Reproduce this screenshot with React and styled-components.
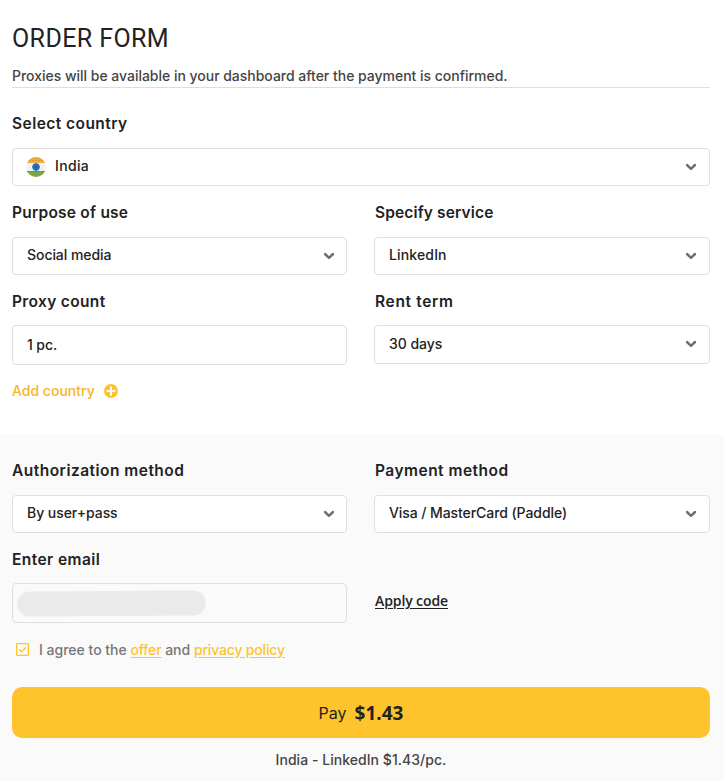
import React from "react";
import styled, { createGlobalStyle } from "styled-components";

const GlobalStyle = createGlobalStyle`
  * { box-sizing: border-box; }
  body {
    margin: 0;
    background: #fff;
    color: #222;
    font-family: Inter, "Liberation Sans", sans-serif;
    font-size: 14px;
    font-weight: 450;
  }
`;

const Page = styled.main`
  display: flex;
  flex-direction: column;
  height: 781px;
  overflow: hidden;
`;

const Section = styled.section`
  padding: 24px 14px 0 12px;
  height: 434px;
`;

const PaymentSection = styled(Section)`
  height: 347px;
  padding-top: 27px;
  background: #fafafa;
`;

const Header = styled.header`
  display: flex;
  flex-direction: column;
  gap: 12px;
  border-bottom: 1px solid #dedede;
  margin-bottom: 26px;
`;

const Title = styled.h1`
  margin: 0;
  font: 400 25px/30px Roboto, sans-serif;
  letter-spacing: 0.4px;
`;

const Subtitle = styled.p`
  margin: 0;
  height: 21px;
  line-height: 20px;
  color: #444;
  white-space: nowrap;
  letter-spacing: -0.02px;
`;

const Grid = styled.div`
  display: grid;
  grid-template-columns: ${(p) => (p.$single ? "1fr" : "335px 336px")};
  column-gap: 27px;
  align-items: start;
  margin-bottom: 17px;
`;

const Field = styled.div`
  display: flex;
  flex-direction: column;
  gap: ${(p) => p.$gap ?? 14}px;
`;

const Label = styled.label`
  font-size: 15.5px;
  font-weight: 600;
  line-height: 20px;
  padding-left: ${(p) => (p.$inset ? 1 : 0)}px;
  letter-spacing: ${(p) => p.$spacing}px;
  white-space: nowrap;
`;

const Control = styled.div`
  display: flex;
  align-items: center;
  height: ${(p) => p.$height ?? 38}px;
  padding: 0 ${(p) => (p.$wide ? 13 : 12)}px 0 14px;
  border: 1px solid #dfdfdf;
  border-radius: 4px;
  background: #fff;
`;

const EmailControl = styled(Control)`
  padding: 0 4px;
  background: #fafafa;
`;

const Value = styled.span`
  flex: 1;
  line-height: 20px;
  padding-bottom: ${(p) => (p.$plain ? 0 : 2)}px;
  letter-spacing: ${(p) => p.$spacing ?? -0.04}px;
  white-space: nowrap;
`;

const FlagIcon = styled.svg`
  flex: none;
  margin: 0 9px 0 -1px;
`;

const ChevronIcon = styled.svg`
  flex: none;
  margin-top: -1px;
`;

const AddButton = styled.button`
  display: flex;
  align-items: center;
  gap: 9px;
  padding: 0;
  margin-top: -1px;
  border: 0;
  background: none;
  color: #f9b424;
  font: 500 14px/20px Inter, sans-serif;
`;

const Redaction = styled.svg`
  display: block;
`;

const ApplyLink = styled.a`
  margin: 41px 0 0 1px;
  font: 600 14px/20px "Open Sans", sans-serif;
  letter-spacing: -0.1px;
  text-decoration: underline;
  text-underline-offset: 2px;
`;

const Agreement = styled.div`
  display: flex;
  align-items: center;
  gap: 9px;
  height: 20px;
  padding-left: 3px;
  margin: -1px 0 28px;
  color: #777;
  letter-spacing: 0;
  white-space: nowrap;
`;

const YellowLink = styled.a`
  color: #ffc42b;
  font-weight: 500;
  letter-spacing: -0.17px;
  text-decoration: underline;
  text-underline-offset: 2px;
`;

const PayButton = styled.button`
  display: flex;
  align-items: center;
  justify-content: center;
  gap: 8px;
  width: 100%;
  height: 51px;
  padding: 0;
  border: 0;
  border-radius: 10px;
  background: #ffc42b;
  color: #222;
  font: 400 16px/24px Inter, sans-serif;
`;

const PayLabel = styled.span`
  padding-top: 1px;
`;

const Price = styled.strong`
  font: 700 19px/24px "Noto Sans", sans-serif;
`;

const Summary = styled.p`
  margin: 12px 0 0;
  line-height: 20px;
  color: #444;
  text-align: center;
  letter-spacing: 0.04px;
`;

function Chevron() {
  return (
    <ChevronIcon width="10" height="8" viewBox="0 0 10 8">
      <path d="M1 2 5 5.8 9 2" fill="none" stroke="#6f6f6f" strokeWidth="2.5" strokeLinecap="round" strokeLinejoin="round" />
    </ChevronIcon>
  );
}

function IndiaFlag() {
  return (
    <FlagIcon width="20" height="20" viewBox="0 0 20 20">
      <clipPath id="disc"><circle cx="10" cy="10" r="10" /></clipPath>
      <g clipPath="url(#disc)">
        <rect width="20" height="20" fill="#f1f1f1" />
        <rect width="20" height="6" fill="#f3ac35" />
        <rect y="14" width="20" height="6" fill="#73a947" />
        <path d="M3 3.5h14M6 1.5h9" stroke="#c68a35" strokeWidth="1" strokeDasharray="1 2" />
        <path d="M1 14.5h18" stroke="#477b3b" strokeWidth="1" strokeDasharray="1 2" />
        <circle cx="10" cy="10" r="3.7" fill="#2472c5" />
        <path d="M6.5 10h7M10 6.5v7" stroke="#174f9c" strokeWidth="1" strokeDasharray="1 1" />
      </g>
    </FlagIcon>
  );
}

function PlusIcon() {
  return (
    <svg width="14" height="14" viewBox="0 0 14 14">
      <circle cx="7" cy="7" r="7" fill="#ffc22c" />
      <path d="M7 3.3v7.4M3.3 7h7.4" stroke="#fff" strokeWidth="2" strokeLinecap="round" />
    </svg>
  );
}

function CheckIcon() {
  return (
    <svg width="15" height="15" viewBox="0 0 15 15">
      <rect x="1.6" y="1.6" width="11.8" height="11.8" rx="0.8" fill="none" stroke="#ffc42b" strokeWidth="1.3" />
      <path d="m4.2 7.6 2.4 2.2 4.3-4.4" fill="none" stroke="#ffc42b" strokeWidth="1.4" />
    </svg>
  );
}

function Select({ label, labelSpacing, value, spacing, height, gap, icon, right }) {
  return (
    <Field $gap={gap}>
      <Label $inset={right} $spacing={labelSpacing}>{label}</Label>
      <Control $height={height} $wide={right || Boolean(icon)}>
        {icon}
        <Value $spacing={spacing}>{value}</Value>
        <Chevron />
      </Control>
    </Field>
  );
}

export default function App() {
  return (
    <Page>
      <GlobalStyle />
      <Section>
        <Header>
          <Title>ORDER FORM</Title>
          <Subtitle>Proxies will be available in your dashboard after the payment is confirmed.</Subtitle>
        </Header>
        <Grid $single>
          <Select label="Select country" labelSpacing={0.45} value="India" spacing={0.35} icon={<IndiaFlag />} />
        </Grid>
        <Grid>
          <Select label="Purpose of use" labelSpacing={0.23} value="Social media" spacing={-0.06} />
          <Select right label="Specify service" labelSpacing={0.13} value="LinkedIn" spacing={0.15} />
        </Grid>
        <Grid>
          <Field $gap={13}>
            <Label $spacing={0.35}>Proxy count</Label>
            <Control $height={40}><Value $plain $spacing={-0.1}>1 pc.</Value></Control>
          </Field>
          <Select right label="Rent term" labelSpacing={0.65} value="30 days" height={39} gap={13} />
        </Grid>
        <AddButton type="button">Add country <PlusIcon /></AddButton>
      </Section>
      <PaymentSection>
        <Grid>
          <Select label="Authorization method" labelSpacing={0.48} value="By user+pass" spacing={-0.05} />
          <Select right label="Payment method" labelSpacing={0.48} value="Visa / MasterCard (Paddle)" spacing={-0.08} />
        </Grid>
        <Grid>
          <Field $gap={13}>
            <Label $spacing={0.42}>Enter email</Label>
            <EmailControl $height={40}>
              <Redaction width="190" height="28" viewBox="0 0 190 28">
                <path d="M13 2.5 176 1.5C193 1.5 193 26.5 176 26.5L13 27.5C-4 27.5-4 2.5 13 2.5Z" fill="#eaeaea" />
              </Redaction>
            </EmailControl>
          </Field>
          <ApplyLink>Apply code</ApplyLink>
        </Grid>
        <Agreement>
          <CheckIcon />
          <span>I agree to the <YellowLink>offer</YellowLink> and <YellowLink>privacy policy</YellowLink></span>
        </Agreement>
        <PayButton type="button"><PayLabel>Pay</PayLabel><Price>$1.43</Price></PayButton>
        <Summary>India - LinkedIn $1.43/pc.</Summary>
      </PaymentSection>
    </Page>
  );
}
